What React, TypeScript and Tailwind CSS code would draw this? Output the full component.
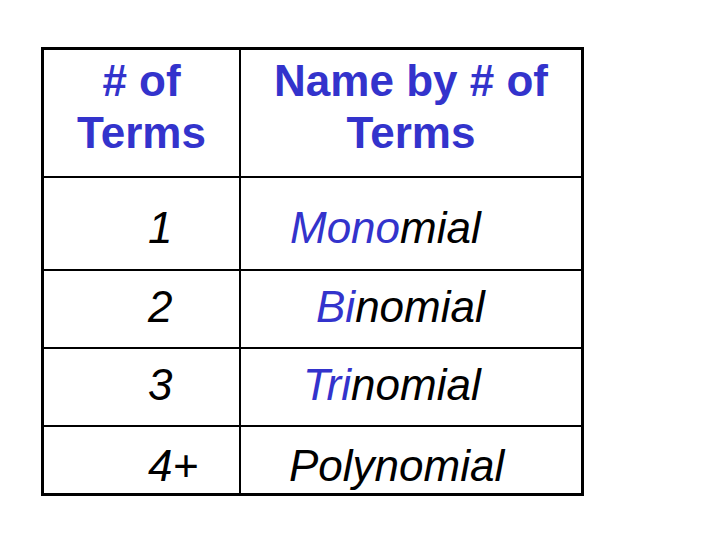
const rows = [
  { num: '1', prefix: 'Mono', rest: 'mial', h: 'h-[91px]', pt: 'pt-[28px]', pl: 'pl-[49px]' },
  { num: '2', prefix: 'Bi', rest: 'nomial', h: 'h-[76px]', pt: 'pt-[14px]', pl: 'pl-[75px]' },
  { num: '3', prefix: 'Tri', rest: 'nomial', h: 'h-[76px]', pt: 'pt-[14px]', pl: 'pl-[62px]' },
  { num: '4+', prefix: '', rest: 'Polynomial', h: 'h-[66px]', pt: 'pt-[17px]', pl: 'pl-[48px]' },
];

export default function App() {
  return (
    <div
      className="w-[720px] h-[540px] bg-white pt-[47px] pl-[41px]"
      style={{ fontFamily: '"Liberation Sans", Arial, sans-serif' }}
    >
      <div className="w-[543px] border-[3px] border-black">
        {/* header */}
        <div className="grid grid-cols-[197px_1fr] h-[128px] border-b-2 border-black">
          <div className="border-r-2 border-black pt-[5px] text-center text-[44px] leading-[52px] font-bold text-[#3333cc]">
            # of
            <br />
            Terms
          </div>
          <div className="pt-[5px] text-center text-[44px] leading-[52px] font-bold text-[#3333cc]">
            Name by # of
            <br />
            Terms
          </div>
        </div>

        {rows.map((r, i) => (
          <div
            key={r.num}
            className={`grid grid-cols-[197px_1fr] ${r.h} ${i < rows.length - 1 ? 'border-b-2 border-black box-content' : ''}`}
          >
            <div className={`border-r-2 border-black ${r.pt} pl-[104px] text-[44px] leading-[44px] italic text-black`}>
              {r.num}
            </div>
            <div className={`${r.pt} ${r.pl} text-[44px] leading-[44px] italic text-black whitespace-nowrap`}>
              <span className="text-[#3333cc]">{r.prefix}</span>
              {r.rest}
            </div>
          </div>
        ))}
      </div>
    </div>
  );
}
